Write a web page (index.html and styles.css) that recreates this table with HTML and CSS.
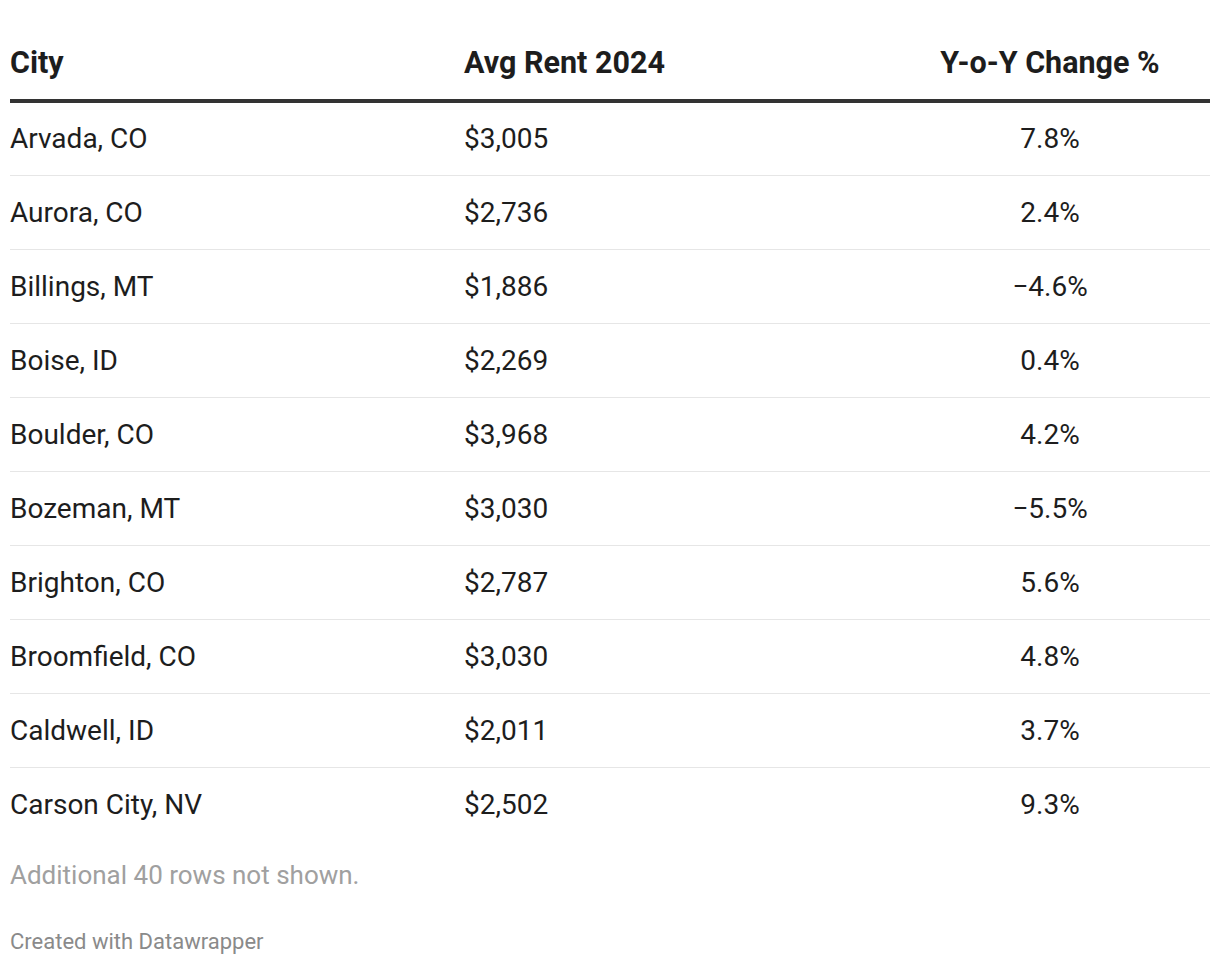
FILE: index.html
```html
<!DOCTYPE html>
<html>
<head>
<meta charset="utf-8">
<link rel="stylesheet" href="styles.css">
</head>
<body>
<div class="chart">
  <table class="rent-table">
    <thead>
      <tr>
        <th class="col-city">City</th>
        <th class="col-rent">Avg Rent 2024</th>
        <th class="col-change">Y-o-Y Change %</th>
      </tr>
    </thead>
    <tbody>
      <tr><td class="col-city">Arvada, CO</td><td class="col-rent">$3,005</td><td class="col-change">7.8%</td></tr>
      <tr><td class="col-city">Aurora, CO</td><td class="col-rent">$2,736</td><td class="col-change">2.4%</td></tr>
      <tr><td class="col-city">Billings, MT</td><td class="col-rent">$1,886</td><td class="col-change">−4.6%</td></tr>
      <tr><td class="col-city">Boise, ID</td><td class="col-rent">$2,269</td><td class="col-change">0.4%</td></tr>
      <tr><td class="col-city">Boulder, CO</td><td class="col-rent">$3,968</td><td class="col-change">4.2%</td></tr>
      <tr><td class="col-city">Bozeman, MT</td><td class="col-rent">$3,030</td><td class="col-change">−5.5%</td></tr>
      <tr><td class="col-city">Brighton, CO</td><td class="col-rent">$2,787</td><td class="col-change">5.6%</td></tr>
      <tr><td class="col-city">Broomfield, CO</td><td class="col-rent">$3,030</td><td class="col-change">4.8%</td></tr>
      <tr><td class="col-city">Caldwell, ID</td><td class="col-rent">$2,011</td><td class="col-change">3.7%</td></tr>
      <tr><td class="col-city">Carson City, NV</td><td class="col-rent">$2,502</td><td class="col-change">9.3%</td></tr>
    </tbody>
  </table>
  <p class="more-rows">Additional 40 rows not shown.</p>
  <p class="credit">Created with Datawrapper</p>
</div>
</body>
</html>
```
FILE: styles.css
```css
* { box-sizing: border-box; }
html, body {
  margin: 0;
  padding: 0;
  background: #ffffff;
}
body {
  font-family: Roboto, "Liberation Sans", Arial, sans-serif;
  color: #1d1d1d;
}
.chart {
  padding: 28px 10px 0 10px;
}
.rent-table {
  width: 1200px;
  border-collapse: collapse;
  table-layout: fixed;
}
.rent-table th {
  font-size: 30.5px;
  font-weight: 700;
  height: 73px;
  padding: 0 0 3px 0;
  vertical-align: middle;
  border-bottom: 4px solid #333333;
  color: #1d1d1d;
}
.rent-table td {
  font-size: 28px;
  font-weight: 400;
  height: 74px;
  padding: 0;
  vertical-align: middle;
  border-bottom: 1px solid #e6e6e6;
}
.rent-table tbody tr:last-child td {
  border-bottom: none;
}
.col-city { width: 454px; text-align: left; }
.col-rent { width: 426px; text-align: left; }
.col-change { width: 320px; text-align: center; }
.more-rows {
  margin: 18px 0 0 0;
  font-size: 26px;
  line-height: 32px;
  color: #a0a0a0;
}
.credit {
  margin: 38px 0 0 0;
  font-size: 22px;
  line-height: 26px;
  color: #8a8a8a;
}
```
